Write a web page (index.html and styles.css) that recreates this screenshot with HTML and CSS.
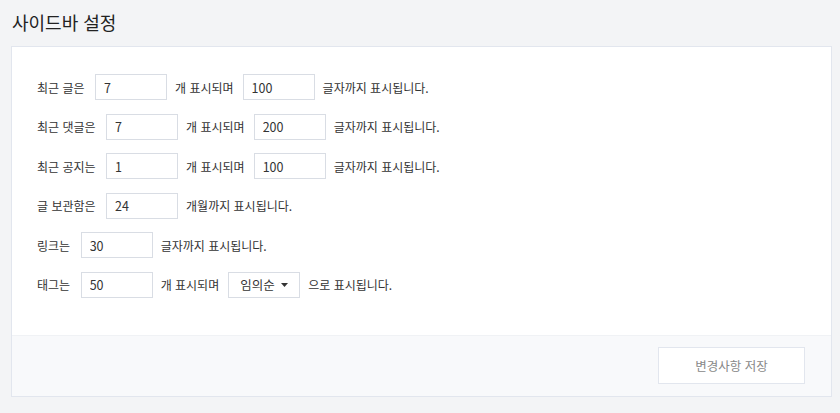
FILE: index.html
```html
<!DOCTYPE html>
<html lang="ko">
<head>
<meta charset="utf-8">
<link rel="stylesheet" href="styles.css">
</head>
<body>
<h1 class="title">사이드바 설정</h1>
<section class="card">
  <div class="body">
    <div class="row"><span class="label">최근 글은</span><input class="num" value="7"><span>개 표시되며</span><input class="num" value="100"><span>글자까지 표시됩니다.</span></div>
    <div class="row"><span class="label">최근 댓글은</span><input class="num" value="7"><span>개 표시되며</span><input class="num" value="200"><span>글자까지 표시됩니다.</span></div>
    <div class="row"><span class="label">최근 공지는</span><input class="num" value="1"><span>개 표시되며</span><input class="num" value="100"><span>글자까지 표시됩니다.</span></div>
    <div class="row"><span class="label">글 보관함은</span><input class="num" value="24"><span>개월까지 표시됩니다.</span></div>
    <div class="row"><span class="label">링크는</span><input class="num" value="30"><span>글자까지 표시됩니다.</span></div>
    <div class="row"><span class="label">태그는</span><input class="num" value="50"><span>개 표시되며</span><div class="select"><span>임의순</span><svg class="caret" width="7" height="4" viewBox="0 0 7 4"><path d="M0 0H7L3.5 4Z" fill="#333"/></svg></div><span>으로 표시됩니다.</span></div>
  </div>
  <div class="footer">
    <button class="save">변경사항 저장</button>
  </div>
</section>
</body>
</html>
```

FILE: styles.css
```css
html, body {
  margin: 0;
  padding: 0;
  background: #f3f4f6;
}
body {
  font-family: "Noto Sans CJK KR", "Noto Sans", sans-serif;
  color: #333;
  padding: 0 8px 0 11px;
}
.title {
  margin: 0;
  padding: 9px 0 0 1px;
  height: 37px;
  box-sizing: border-box;
  font-size: 18px;
  font-weight: 400;
  line-height: 26px;
  color: #222;
}
.card {
  margin-top: 9px;
  background: #fff;
  border: 1px solid #e2e6ee;
  width: 821px;
  box-sizing: border-box;
}
.body {
  padding: 27px 25px 37px;
  display: flex;
  flex-direction: column;
  gap: 13.6px;
}
.row {
  display: flex;
  align-items: center;
  gap: 8px;
  height: 26px;
  font-size: 12px;
}
.row > span {
  margin-right: 1px;
}
.row > .label {
  margin-right: 2.5px;
}
.num {
  width: 72px;
  height: 26px;
  box-sizing: border-box;
  border: 1px solid #d9dde4;
  padding: 0 8px;
  font-family: inherit;
  font-size: 12.5px;
  color: #333;
  outline: none;
}
.select {
  width: 72px;
  height: 26px;
  box-sizing: border-box;
  border: 1px solid #d9dde4;
  display: flex;
  align-items: center;
  justify-content: space-between;
  padding: 0 11px 0 11px;
  font-size: 12.5px;
}
.footer {
  background: #f8f9fb;
  border-top: 1px solid #f0f2f5;
  height: 61px;
  box-sizing: border-box;
  display: flex;
  justify-content: flex-end;
  align-items: center;
  padding-right: 26px;
}
.save {
  width: 147px;
  height: 37px;
  background: #fff;
  border: 1px solid #e2e6ee;
  font-family: inherit;
  font-size: 12.5px;
  color: #888;
}
```
